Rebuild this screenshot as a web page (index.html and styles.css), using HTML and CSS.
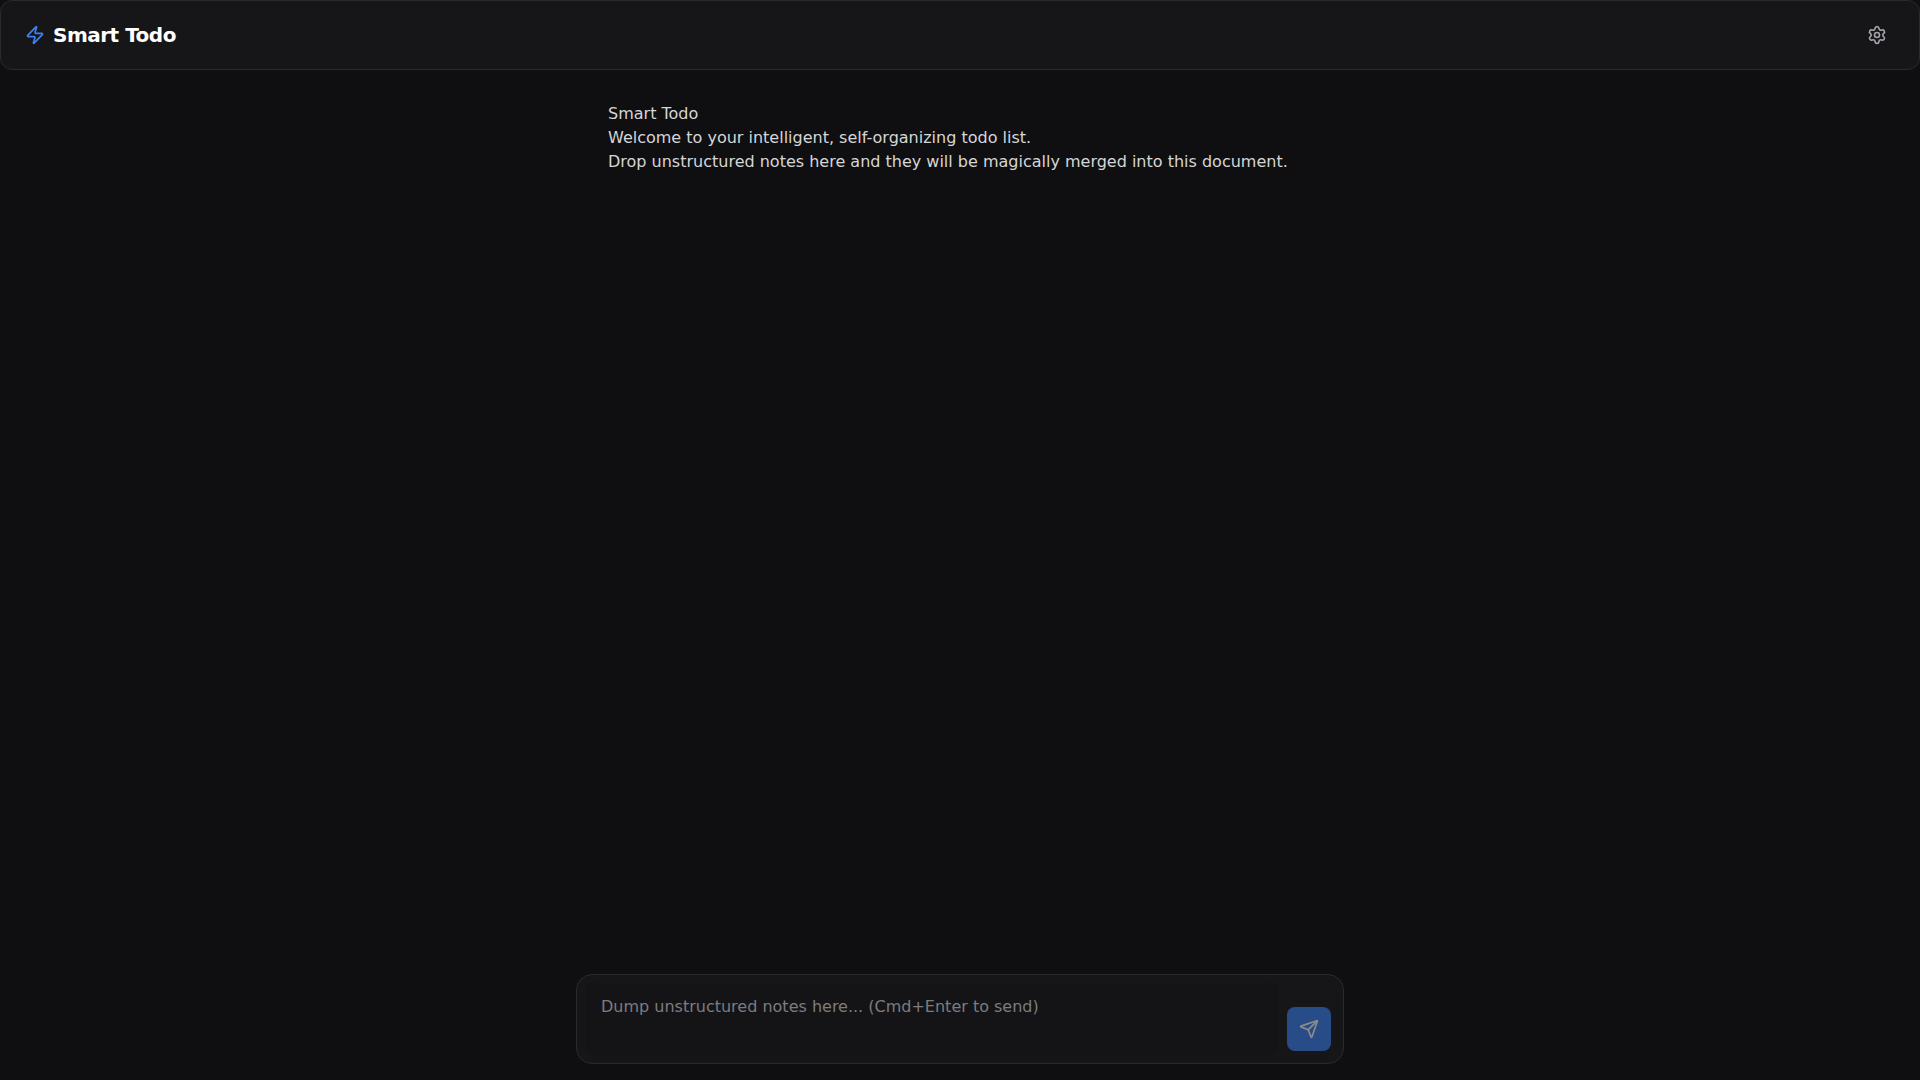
FILE: index.html
```html
<!DOCTYPE html>
<html lang="en">
<head>
<meta charset="utf-8">
<title>Smart Todo</title>
<link rel="stylesheet" href="styles.css">
</head>
<body>
<div class="app">
  <header class="topbar">
    <div class="brand">
      <svg class="icon icon-zap" viewBox="0 0 24 24" width="20" height="20"><path d="M4 14a1 1 0 0 1-.78-1.63l9.9-10.2a.5.5 0 0 1 .86.46l-1.92 6.02A1 1 0 0 0 13 10h7a1 1 0 0 1 .78 1.63l-9.9 10.2a.5.5 0 0 1-.86-.46l1.92-6.02A1 1 0 0 0 11 14z"/></svg>
      <h1 class="title">Smart Todo</h1>
    </div>
    <button class="settings" type="button" aria-label="Settings">
      <svg class="icon" viewBox="0 0 24 24" width="20" height="20"><path d="M9.671 4.136a2.34 2.34 0 0 1 4.659 0 2.34 2.34 0 0 0 3.319 1.915 2.34 2.34 0 0 1 2.33 4.033 2.34 2.34 0 0 0 0 3.831 2.34 2.34 0 0 1-2.33 4.033 2.34 2.34 0 0 0-3.319 1.915 2.34 2.34 0 0 1-4.659 0 2.34 2.34 0 0 0-3.32-1.915 2.34 2.34 0 0 1-2.33-4.033 2.34 2.34 0 0 0 0-3.831A2.34 2.34 0 0 1 6.35 6.051a2.34 2.34 0 0 0 3.319-1.915"/><circle cx="12" cy="12" r="3"/></svg>
    </button>
  </header>
  <main class="doc">
    <p class="line">Smart Todo</p>
    <p class="line">Welcome to your intelligent, self-organizing todo list.</p>
    <p class="line">Drop unstructured notes here and they will be magically merged into this document.</p>
  </main>
  <form class="composer">
    <textarea class="notes" placeholder="Dump unstructured notes here... (Cmd+Enter to send)"></textarea>
    <button class="send" type="button" aria-label="Send">
      <svg class="icon" viewBox="0 0 24 24" width="20" height="20"><path d="M14.536 21.686a.5.5 0 0 0 .937-.024l6.5-19a.496.496 0 0 0-.635-.635l-19 6.5a.5.5 0 0 0-.024.937l7.93 3.18a2 2 0 0 1 1.112 1.11z"/><path d="m21.854 2.147-10.94 10.939"/></svg>
    </button>
  </form>
</div>
</body>
</html>
```
FILE: styles.css
```css
* { box-sizing: border-box; }
html, body { height: 100%; margin: 0; }
body {
  background: #0f0f11;
  color: #d6d6d6;
  font-family: "DejaVu Sans", sans-serif;
  font-size: 16px;
  line-height: 24px;
}
.app { height: 100vh; display: flex; flex-direction: column; }
.icon {
  display: block;
  fill: none;
  stroke: currentColor;
  stroke-width: 2;
  stroke-linecap: round;
  stroke-linejoin: round;
}
.topbar {
  height: 70px;
  flex: none;
  display: flex;
  align-items: center;
  justify-content: space-between;
  padding: 0 24px;
  background: #161619;
  border: 1px solid #2a2a2e;
  border-radius: 12px;
}
.brand { display: flex; align-items: center; gap: 8px; }
.icon-zap { color: #3b82f6; }
.title {
  margin: 0;
  font-size: 20px;
  line-height: 28px;
  font-weight: 700;
  letter-spacing: -0.5px;
  color: #fff;
}
.settings {
  padding: 8px;
  background: none;
  border: 0;
  color: #a1a1aa;
  border-radius: 8px;
}
.doc {
  flex: 1;
  width: 768px;
  margin: 0 auto;
  padding: 32px;
}
.line { margin: 0; }
.composer {
  flex: none;
  width: 768px;
  height: 90px;
  margin: 0 auto 16px;
  display: flex;
  gap: 8px;
  padding: 8px 12px 8px 8px;
  background: #161619;
  border: 1px solid #2a2a2e;
  border-radius: 16px;
}
.notes {
  flex: 1;
  height: 72px;
  padding: 12px 16px;
  resize: none;
  background: #141416;
  border: 0;
  border-radius: 8px;
  outline: 0;
  color: #d6d6d6;
  font: inherit;
}
.notes::placeholder { color: #7c7c80; opacity: 1; }
.send {
  align-self: flex-end;
  width: 44px;
  height: 44px;
  margin-bottom: 4px;
  display: flex;
  align-items: center;
  justify-content: center;
  padding: 0;
  background: #3b82f6;
  color: #fff;
  border: 0;
  border-radius: 8px;
  opacity: 0.5;
}
```
